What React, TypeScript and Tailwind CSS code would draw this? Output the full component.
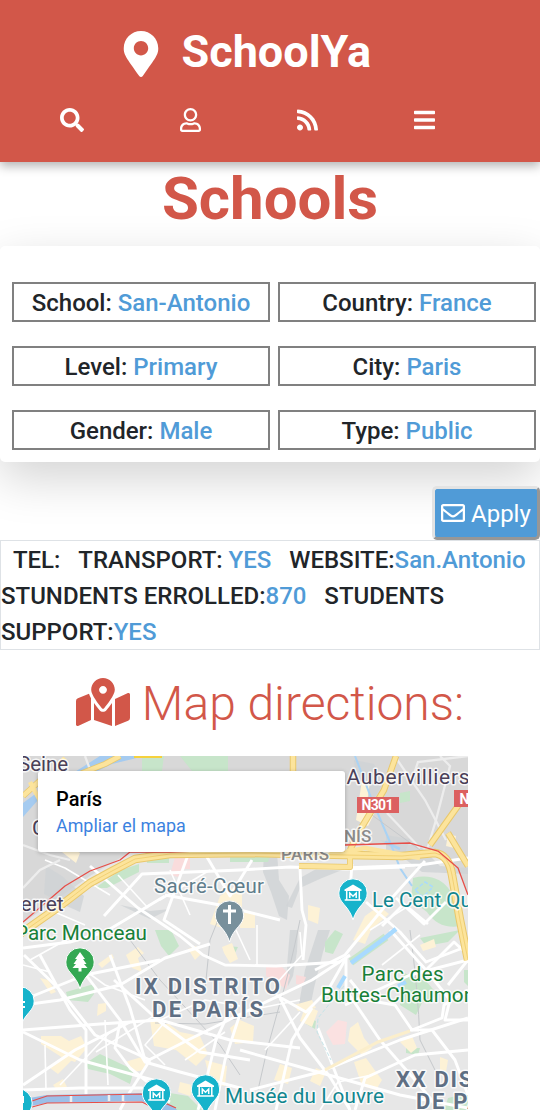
import type { ReactNode } from "react";
import {
  FaBars,
  FaMapMarkedAlt,
  FaMapMarkerAlt,
  FaRegEnvelope,
  FaRegUser,
  FaRss,
  FaSearch,
} from "react-icons/fa";

const NB = "\u00a0";

function Value({ children }: { children: ReactNode }) {
  return <span className="text-[#509bd7]">{children}</span>;
}

const fields = [
  ["School", "San-Antonio"],
  ["Country", "France"],
  ["Level", "Primary"],
  ["City", "Paris"],
  ["Gender", "Male"],
  ["Type", "Public"],
];

function Pin({ x, y, color, children }: { x: number; y: number; color: string; children?: ReactNode }) {
  return (
    <g transform={`translate(${x} ${y})`}>
      <path
        d="M0 27C-1.5 21-5 16-9 11.500C-12 8-14.200 5-14.200 0A14.200 14.200 0 0 1 14.200 0C14.200 5 12 8 9 11.500C5 16 1.500 21 0 27Z"
        fill={color}
        stroke="#fff"
        strokeWidth="1"
      />
      {children}
    </g>
  );
}

function Museum({ x, y }: { x: number; y: number }) {
  return (
    <Pin x={x} y={y} color="#16b3cb">
      <path d="M-8.500-3.500L0-8.500L8.500-3.500V-2H-8.500Z" fill="#fff" />
      <path d="M-6.300-2V6.500M6.300-2V6.500M-8.300 7H8.300" stroke="#fff" strokeWidth="1.500" fill="none" />
      <path d="M-3.200 5V0L0 3.200L3.200 0V5" stroke="#fff" strokeWidth="1.500" fill="none" />
    </Pin>
  );
}

const yellowAreas = [
  "M66 844L80 853L76 863L62 852Z",
  "M220 896l12-8 10 6 0 14-14 6-6 14-12-4Z",
  "M240 913h15v15h-15Z",
  "M356 820l6-40 8 2-4 28 8 4-6 12Z",
  "M365 916l14-10 10 8-18 16-6 14-12-4Z",
  "M448 834l8 2-2 12-8-2Z",
  "M308 905l12 3-2 16-10-4Z",
  "M126 955l12-8 6 6-6 5 4 14-10-4Z",
  "M98 964l14-10 2 4-12 10Z",
  "M188 949l8-3 5 8-6 6Z",
  "M222 947l10-4 6 16-8 4-6-10Z",
  "M40 978l8 2 8 12-5 2Z",
  "M98 1004l8-1 0 8-9 5Z",
  "M41 1036l20 0 8 5 12-5 6 12-12 14-12-4-22-14Z",
  "M50 1068l18-14 4 6-14 14Z",
  "M150 1020l16 2 14 10 20 4 8 18-12 12-20-16-22-4Z",
  "M230 1028l10-8 14 6-1 16-18 2Z",
  "M125 1062l20-6 0 14-12 2Z",
  "M205 1060l22 6-2 20-14-2Z",
  "M148 1092l10-3 4 8-12 3Z",
  "M180 1082l16 4-6 10-12-4Z",
  "M306 1005l12 6-6 16-12-6Z",
  "M350 1028l8-6 6 16 8 10-10 7-14-14Z",
  "M354 1062l12-4 10 14 6 8-6 10-14-4Z",
  "M294 1005l18-5 4 8-18 3Z",
  "M280 1064l12 4-4 16-14-4Z",
  "M316 1068l10 4-6 14-10-5Z",
  "M440 1057l8 3-2 12-6-2Z",
  "M420 945l14-6 2 8-13 4Z",
  "M400 1042l12-6 5 12-6 5Z",
  "M53 1085l10-6 4 8-10 3Z",
];

const greenAreas = [
  "M142 756h22l-2 15h-20Z",
  "M180 756h48v15h-36Z",
  "M95 888l26-18 18-6 0 8-32 16Z",
  "M145 850h24v13h-22Z",
  "M230 852h42l-4 10h-38Z",
  "M400 793l10-2v10l-10 2Z",
  "M413 878q25-6 38 14l10 34q-22 4-34-14l-16-12Z",
  "M66 992l28-8 0 10-6 8-20-2Z",
  "M155 930l16 0 8 16-10 10-8-10Z",
  "M86 1063l14-9 34 16-4 14-20-10-22-5Z",
  "M227 952l8 1 3-6-10-1Z",
  "M404 973l22 8 12 14-16 8-6 12-16-10Z",
  "M406 1040l8 8 6 0-2 7-12-2Z",
  "M306 1017l10 4-1 8-9-5Z",
  "M325 942l10-12 8 4-10 20-8-2Z",
  "M420 938l40-8-12 12-22 4Z",
  "M164 1092l24 4 14 14h-40Z",
  "M448 1098l20-5v17h-24Z",
  "M464 970l4 0v16l-4-4Z",
];

const grayAreas = [
  "M46 866l16 10 22 20-4 16-18-8-18-10Z",
  "M264 852h13l2 28 10 16-2 24-8-4-8-24-8-20Z",
  "M300 878l18-10 24 2-20 8-22 10-8 20-6-2Z",
  "M290 930h8l-1 22-4 24-5 10-1-20Z",
  "M318 930h12l-7 22-9 36-4 20-11-4 6-34Z",
  "M380 840l40 6 20 20 28 2v6l-46-2Z",
  "M354 760l20 4 10 18-12 20-16-20Z",
  "M386 835l24 4-6 16-18-4Z",
  "M120 905l30 6 20-2-20 10Z",
];

const mainRoads = [
  "M23 948L70 942L105 932L165 896",
  "M90 866L138 908L180 936L203 955L225 965L276 966L340 962",
  "M104 916L142 874L240 870L290 867L346 869L405 867",
  "M188 855L164 920L200 944",
  "M165 895L220 905L280 920",
  "M204 852L230 896L252 860",
  "M300 868L302 910L306 925L303 960",
  "M352 864L350 890",
  "M425 861L390 900L345 955L315 970",
  "M345 868L420 865L468 858",
  "M366 902L400 932L426 962L468 946",
  "M396 898L424 924L446 902",
  "M382 926L404 904L428 924",
  "M23 1005L60 1000L120 985L165 958L210 944",
  "M23 1000L85 975L160 960",
  "M24 955L60 990L95 1035L150 1060",
  "M23 1032L80 1060L160 1082",
  "M23 1030L100 1024L160 1020L230 1040L300 1048",
  "M23 1085L75 1050L130 1022",
  "M40 955L70 1010L86 1030L86 1095",
  "M23 1090L80 1088L142 1088L170 1102",
  "M86 975L120 1020L145 1062L180 1072L240 1088",
  "M110 955L130 1008L145 1060",
  "M114 980L160 1022L200 1052L250 1060",
  "M145 1062L188 1040L245 1012L312 980L350 955",
  "M150 1060L128 1095L120 1110",
  "M230 1010L216 1040L205 1085L198 1110",
  "M240 1014L225 1060L215 1110",
  "M120 1022L115 1048L130 1068L155 1088",
  "M280 998L300 1038L330 1077L350 1110",
  "M346 958L346 990L380 1040L415 1080L440 1110",
  "M318 1028L350 1110",
  "M345 1005L410 975L468 960",
  "M250 1090L320 1072L400 1040L468 1018",
  "M240 1050L318 1072L400 1095L468 1108",
  "M276 995L306 1012L328 990L345 960",
  "M276 1110L292 1040L312 1008",
  "M410 1030L432 1030L455 1060L468 1095",
  "M430 975L450 1000L445 1020L468 1020",
  "M468 990L444 1005L442 1018L412 1030L395 1005L366 1000L350 980",
  "M448 985L468 960",
  "M390 930L426 970L454 942L468 955",
  "M355 1110L365 1078L415 1055L468 1050",
];

const minorRoads = [
  "M45 860L65 868L110 895",
  "M30 960L75 935",
  "M30 930L50 910L85 925",
  "M148 908L118 875",
  "M160 900L210 870",
  "M170 870L190 915",
  "M236 930L250 960",
  "M257 925L257 965",
  "M68 958L105 985L145 1000",
  "M23 965L50 972",
  "M105 1020L108 1085",
  "M45 1045L46 1090",
  "M165 1022L145 1045L165 1065",
  "M185 1060L225 1032",
  "M160 1020L205 1000L240 1006",
  "M96 1052L160 1012",
  "M60 1085L110 1032",
  "M250 1010L300 1000",
  "M265 1050L300 1012",
  "M320 1110L338 1082L372 1075",
  "M370 930L410 905",
  "M300 932L302 955L275 985",
  "M382 965L420 935",
];

const RING_ROAD =
  "M20 934L60 906L90 883L112 871L135 859L170 854L250 853L345 855L402 856L435 853Q449 855 452 875L460 920L468 960";

function Label({ x, y, size, color, weight = 400, width, spacing, children }: {
  x: number; y: number; size: number; color: string; weight?: number; width?: number; spacing?: number; children: string;
}) {
  return (
    <text
      x={x}
      y={y}
      fontSize={size}
      fill={color}
      fontWeight={weight}
      textLength={width}
      letterSpacing={spacing}
      stroke="#fff"
      strokeWidth="3"
      strokeOpacity="0.8"
      strokeLinejoin="round"
      paintOrder="stroke"
    >
      {children}
    </text>
  );
}

function ParisMap() {
  return (
    <svg viewBox="23 756 445 354" width="445" height="354" className="block" fontFamily="Roboto, sans-serif">
      <rect x="23" y="756" width="445" height="354" fill="#e7e7e7" />
      <path d="M23 756H468V895L458 868L438 851L410 843L345 845L280 852H130L90 876L23 923Z" fill="#d8d8d8" />

      {grayAreas.map((d) => <path key={d} d={d} fill="#cfd3d6" opacity="0.8" />)}
      {greenAreas.map((d) => <path key={d} d={d} fill="#c7e5ca" />)}
      {yellowAreas.map((d) => <path key={d} d={d} fill="#fdf2d6" />)}
      <path d="M175 857h15l0 12-8 0-4 8-8-2Z" fill="#f9dcdc" />
      <path d="M266 967h16l8 8-4 14-20-13Z" fill="#f9dcdc" />
      <path d="M326 1032l12-12 9 2-2 22-12 1Z" fill="#fbe1e1" />
      <path d="M296 975l10 2-3 8-7-1Z" fill="#f9dcdc" />

      <path d="M23 817L38 800V792L23 803Z" fill="#a5cbf0" />
      <path d="M75 782L112 764L145 756H100L70 775Z" fill="#a5cbf0" />
      <path d="M355 756L372 800L390 842L400 868L412 886" stroke="#a9d3f5" strokeWidth="2" fill="none" />
      <path d="M385 842L400 849" stroke="#a9d3f5" strokeWidth="3" fill="none" />
      <path d="M351 962L386 937" stroke="#c7e5ca" strokeWidth="8" />
      <path d="M415 890l10-8 8 5-10 10Z" stroke="#a8daff" strokeWidth="1.500" fill="none" strokeDasharray="4 2" />

      <g stroke="#c6c9cc" strokeWidth="1" fill="none">
        <path d="M300 920Q290 970 278 1010T258 1090" />
        <path d="M130 940L160 980L220 1045L240 1075" />
        <path d="M410 930Q418 990 420 1040L435 1070" />
        <path d="M155 1023L205 1024L280 1012" />
        <path d="M205 990L210 940L220 915" />
        <path d="M325 1070L344 1060" />
        <path d="M300 820L340 850M365 810L420 850" />
      </g>

      <g stroke="#fff" fill="none" strokeLinejoin="round">
        {minorRoads.map((d) => <path key={d} d={d} strokeWidth="1.600" />)}
        {mainRoads.map((d) => <path key={d} d={d} strokeWidth="2.900" />)}
      </g>
      <path d="M351 963L385 938L396 929" stroke="#a8daff" strokeWidth="4.500" fill="none" />
      <path d="M338 988L345 976M398 986L406 982" stroke="#a8daff" strokeWidth="4" />
      <g stroke="#ededed" strokeWidth="2.300" fill="none">
        <path d="M387 813L420 848" />
        <path d="M396 758L425 800L446 840" />
        <path d="M440 756L450 766L436 820L427 850" />
        <path d="M412 780L418 762L468 756" />
        <path d="M23 845L50 855L70 860" />
        <path d="M60 860L40 870L23 888" />
        <path d="M66 768L80 790M85 756L92 775" />
      </g>
      <path d="M344 986L318 1018L317 1032L331 1060" stroke="#c5e4e8" strokeWidth="1" fill="none" strokeDasharray="4 2" />
      <path d="M325 1070L378 1042L410 1031" stroke="#fbeecb" strokeWidth="3" fill="none" />

      <g fill="none" strokeLinejoin="round">
        <g stroke="#e9c86c">
          <path d={RING_ROAD} strokeWidth="8.500" />
          <path d="M299 866L350 867V850" strokeWidth="6" />
          <path d="M293 756V771M396 756L384 790L360 830L350 850" strokeWidth="6.500" />
          <path d="M468 792L430 845M448 833L468 866" strokeWidth="6.500" />
          <path d="M75 776L105 764L120 756M23 796L45 776" strokeWidth="6" />
        </g>
        <g stroke="#fce49c">
          <path d="M299 866L350 867V850M345 852L365 848L420 858" strokeWidth="4.500" />
          <path d="M293 756V771M396 756L384 790L360 830L350 850" strokeWidth="4.500" />
          <path d="M468 792L430 845M448 833L468 866" strokeWidth="4.500" />
          <path d="M75 776L105 764L120 756M23 796L45 776M30 782L45 810M65 758L55 768" strokeWidth="4.500" />
          <path d={RING_ROAD} strokeWidth="6.500" />
        </g>
        <path d={RING_ROAD} stroke="#f1ce70" strokeWidth="0.900" />
        <path d="M23 922L65 886L90 871L120 860L130 852H170L280 848L345 845L410 843L438 851L458 868L468 895" stroke="#e74e48" strokeWidth="1.300" />
      </g>

      <path d="M30 1102L47 1099L142 1097L170 1109L178 1116" stroke="#9cbfe8" strokeWidth="8" fill="none" />
      <path d="M32 1107L47 1103L142 1102L162 1112M32 1101L47 1096L145 1094L176 1108" stroke="#e74e48" strokeWidth="1.200" fill="none" />
      <path d="M71 1096v6M109 1095v6M123 1095v6M150 1098l-3 6" stroke="#eee" strokeWidth="2.500" />

      <rect x="134" y="752" width="28" height="6" fill="#f5d13d" />

      <Label x={18} y={771} size={20.5} color="#4a4058">Seine</Label>
      <Label x={32} y={835} size={21} color="#4a4058">Clichy</Label>
      <Label x={346.5} y={784} size={21} color="#4a4058" width={123}>Aubervilliers</Label>
      <Label x={20.5} y={911} size={21} color="#4a4058">erret</Label>
      <Label x={344} y={842} size={17} color="#8b8b8b" weight={500}>NÍS</Label>
      <Label x={281} y={860} size={17} color="#8b8b8b" weight={500} width={48}>PARIS</Label>
      <Label x={154} y={893} size={20.5} color="#607d8b" width={110}>Sacré-Cœur</Label>
      <Label x={15} y={940} size={20.7} color="#188038" width={132}>Parc Monceau</Label>
      <Label x={372} y={907} size={20.5} color="#12868f">Le Cent Quatre</Label>
      <Label x={135} y={994} size={22} color="#5f6f83" weight={700} width={145}>IX DISTRITO</Label>
      <Label x={152} y={1016.5} size={22} color="#5f6f83" weight={700} width={111}>DE PARÍS</Label>
      <Label x={361.5} y={980.5} size={20.5} color="#188038" width={82}>Parc des</Label>
      <Label x={321} y={1001.5} size={20.7} color="#188038">Buttes-Chaumont</Label>
      <Label x={396} y={1087} size={22} color="#5f6f83" weight={700} spacing={1.7}>XX DISTRITO</Label>
      <Label x={416} y={1109} size={22} color="#5f6f83" weight={700} spacing={1.7}>DE PARÍS</Label>
      <Label x={225} y={1103} size={20.7} color="#12868f" width={159}>Musée du Louvre</Label>

      <rect x="357" y="797" width="42" height="16" fill="#dc6060" />
      <text x="361.500" y="810" fontSize="14" fontWeight="700" fill="#fff" textLength="32">N301</text>
      <rect x="454" y="790" width="42" height="17" fill="#dc6060" />
      <text x="459.500" y="804" fontSize="14" fontWeight="700" fill="#fff">N2</text>

      <Pin x={229.5} y={915} color="#78909c">
        <path d="M0-10V9M-6.500-4H6.500" stroke="#fff" strokeWidth="3" />
      </Pin>
      <Pin x={80} y={962} color="#34a853">
        <path d="M0-10L5-3H3L6.500 2H4L7.500 6H1.500V9.500H-1.500V6H-7.500L-4 2H-6.500L-3-3H-5Z" fill="#fff" />
      </Pin>
      <Museum x={353} y={893} />
      <Museum x={156.5} y={1093} />
      <Museum x={205.5} y={1089} />
      <Pin x={20} y={1001} color="#16b3cb"><path d="M-3 1H5M-3 6H5" stroke="#fff" strokeWidth="2" /></Pin>
      <Pin x={18} y={1103} color="#16b3cb"><path d="M0-6H5V0" stroke="#fff" strokeWidth="2" fill="none" /></Pin>
    </svg>
  );
}

export default function App() {
  return (
    <div className="h-[1110px] w-[540px] overflow-hidden bg-white font-['Roboto',sans-serif] text-[#212529]">
      <header className="relative z-10 h-[162px] bg-[#d25749] text-white shadow-[0_4px_10px_rgba(0,0,0,0.3)]">
        <div className="flex h-[100px] items-start pt-[31px] pl-[118px]">
          <FaMapMarkerAlt className="size-[46px]" />
          <span className="-mt-0.5 ml-[17.5px] text-[45px] leading-[45px] font-bold">SchoolYa</span>
        </div>
        <nav className="flex gap-24 pt-2 pl-[60px]">
          <FaSearch className="h-6 w-6" />
          <FaRegUser className="h-6 w-[21px]" />
          <FaRss className="h-6 w-[21px]" />
          <FaBars className="h-6 w-[21px]" />
        </nav>
      </header>

      <h1 className="h-[84px] pt-px text-center text-[60px] leading-[72px] font-bold text-[#d25749]">Schools</h1>

      <section className="grid h-[216px] grid-cols-2 content-start gap-x-2 gap-y-6 rounded-[5px] bg-white pt-9 pr-1 pl-3 shadow-[0_16px_48px_rgba(0,0,0,0.175)]">
        {fields.map(([label, value]) => (
          <div key={label} className="h-10 border-2 border-[#808080] pt-px text-center text-2xl leading-[37px] font-medium">
            {label}: <Value>{value}</Value>
          </div>
        ))}
      </section>

      <div className="flex justify-end pt-6">
        <button className="flex h-[54px] w-[108px] items-center gap-1.5 rounded-[5px] border-3 border-t-[#e3e3e3] border-r-[#979797] border-b-[#979797] border-l-[#e3e3e3] bg-[#509bd7] pl-1.5 text-2xl text-white">
          <FaRegEnvelope className="size-6 shrink-0" />
          <span className="pt-0.5">Apply</span>
        </button>
      </div>

      <div className="h-[110px] border border-[#dee2e6] pt-px text-2xl leading-9 font-medium whitespace-nowrap">
        <p>{NB + NB}TEL:{NB + NB + NB}TRANSPORT: <Value>YES</Value>{NB + NB + NB}WEBSITE:<Value>San.Antonio</Value></p>
        <p>STUNDENTS ERROLLED:<Value>870</Value>{NB + NB + NB}STUDENTS</p>
        <p>SUPPORT:<Value>YES</Value></p>
      </div>

      <h2 className="flex h-[106px] items-center justify-center gap-3 text-5xl font-light text-[#d25749]">
        <FaMapMarkedAlt className="mb-0.5 h-12 w-[54px]" />
        <span className="pt-0.5">Map directions:</span>
      </h2>

      <div className="relative ml-[23px] w-[445px]">
        <ParisMap />
        <div className="absolute top-[15px] left-[15px] h-[81px] w-[307px] rounded-[3px] bg-white px-[18px] pt-4 shadow-[0_1px_4px_rgba(0,0,0,0.25)]">
          <p className="text-[20px] leading-6 font-medium text-black">París</p>
          <p className="mt-[3px] text-[17.9px] leading-6 text-[#3b82e0]">Ampliar el mapa</p>
        </div>
      </div>
    </div>
  );
}
